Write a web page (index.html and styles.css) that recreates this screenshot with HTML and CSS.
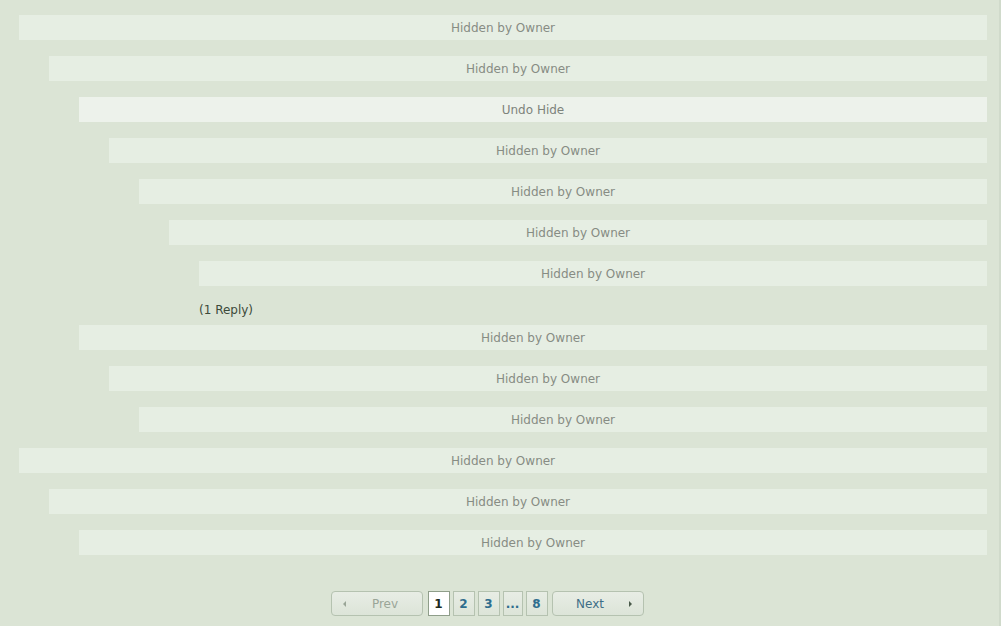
FILE: index.html
```html
<!DOCTYPE html>
<html lang="en">

<head>
    <meta charset="UTF-8">
    <meta name="viewport" content="width=device-width, initial-scale=1.0">
    <title>Comments</title>
    <link rel="stylesheet" href="styles.css">
</head>

<body>
    <div class="wrapper">
        <div class="comments">
            <div class="hidden-row level-0">Hidden by Owner</div>
            <div class="hidden-row level-1">Hidden by Owner</div>
            <div class="hidden-row level-2 undo">Undo Hide</div>
            <div class="hidden-row level-3">Hidden by Owner</div>
            <div class="hidden-row level-4">Hidden by Owner</div>
            <div class="hidden-row level-5">Hidden by Owner</div>
            <div class="hidden-row level-6">Hidden by Owner</div>
            <div class="reply-count level-6">(1 Reply)</div>
            <div class="hidden-row level-2">Hidden by Owner</div>
            <div class="hidden-row level-3">Hidden by Owner</div>
            <div class="hidden-row level-4">Hidden by Owner</div>
            <div class="hidden-row level-0">Hidden by Owner</div>
            <div class="hidden-row level-1">Hidden by Owner</div>
            <div class="hidden-row level-2">Hidden by Owner</div>
        </div>

        <div class="pager">
            <span class="pager-btn prev disabled"><span class="arrow left"></span>Prev</span>
            <span class="page-num current">1</span>
            <span class="page-num">2</span>
            <span class="page-num">3</span>
            <span class="page-num dots">...</span>
            <span class="page-num">8</span>
            <span class="pager-btn next">Next<span class="arrow right"></span></span>
        </div>
    </div>
</body>

</html>
```

FILE: styles.css
```css
body {
    margin: 0;
    background-color: #dbe4d5;
    font-family: 'DejaVu Sans', Verdana, sans-serif;
    font-size: 12px;
}

.wrapper {
    height: 626px;
    box-sizing: border-box;
    padding: 15px 12px 0 19px;
    border-right: 2px solid #d0dacb;
    overflow: hidden;
}

.comments {
    display: flex;
    flex-direction: column;
}

.hidden-row {
    box-sizing: border-box;
    height: 25px;
    padding-top: 1px;
    line-height: 24px;
    margin-bottom: 16px;
    background-color: #e6eee3;
    color: #878c84;
    text-align: center;
    font-size: 12px;
}

.hidden-row.undo {
    background-color: #edf2eb;
    color: #7d837b;
}

.level-1 { margin-left: 30px; }
.level-2 { margin-left: 60px; }
.level-3 { margin-left: 90px; }
.level-4 { margin-left: 120px; }
.level-5 { margin-left: 150px; }
.level-6 { margin-left: 180px; }

.reply-count {
    height: 16px;
    line-height: 16px;
    margin-bottom: 7px;
    color: #3d4a3a;
    font-size: 12px;
}

.pager {
    display: flex;
    justify-content: center;
    align-items: center;
    margin-top: 20px;
    margin-left: -19px;
    margin-right: -12px;
    padding-right: 24px;
}

.pager-btn,
.page-num {
    box-sizing: border-box;
    height: 25px;
    line-height: 24px;
    border: 1px solid #b5c2b0;
    background: linear-gradient(#e8ede5, #dce4d8);
    font-size: 12px;
}

.pager-btn {
    position: relative;
    width: 92px;
    border-radius: 4px;
    color: #3f6f87;
    text-align: center;
    margin: 0 3px;
}

.pager-btn.prev {
    padding-left: 16px;
}

.pager-btn.next {
    padding-right: 16px;
}

.pager-btn.disabled {
    color: #9aa597;
}

.arrow {
    position: absolute;
    top: 9px;
    width: 0;
    height: 0;
    border-top: 3px solid transparent;
    border-bottom: 3px solid transparent;
}

.arrow.left {
    left: 11px;
    border-right: 3px solid #9aa597;
}

.arrow.right {
    right: 11px;
    border-left: 3px solid #4a5a4a;
}

.page-num {
    width: 22px;
    margin: 0 1.5px;
    text-align: center;
    color: #2e6d8e;
    font-weight: bold;
}

.page-num.dots {
    width: 20px;
}

.page-num.current {
    background: #ffffff;
    border-color: #8f9e8a;
    color: #1d2a1d;
}
```
